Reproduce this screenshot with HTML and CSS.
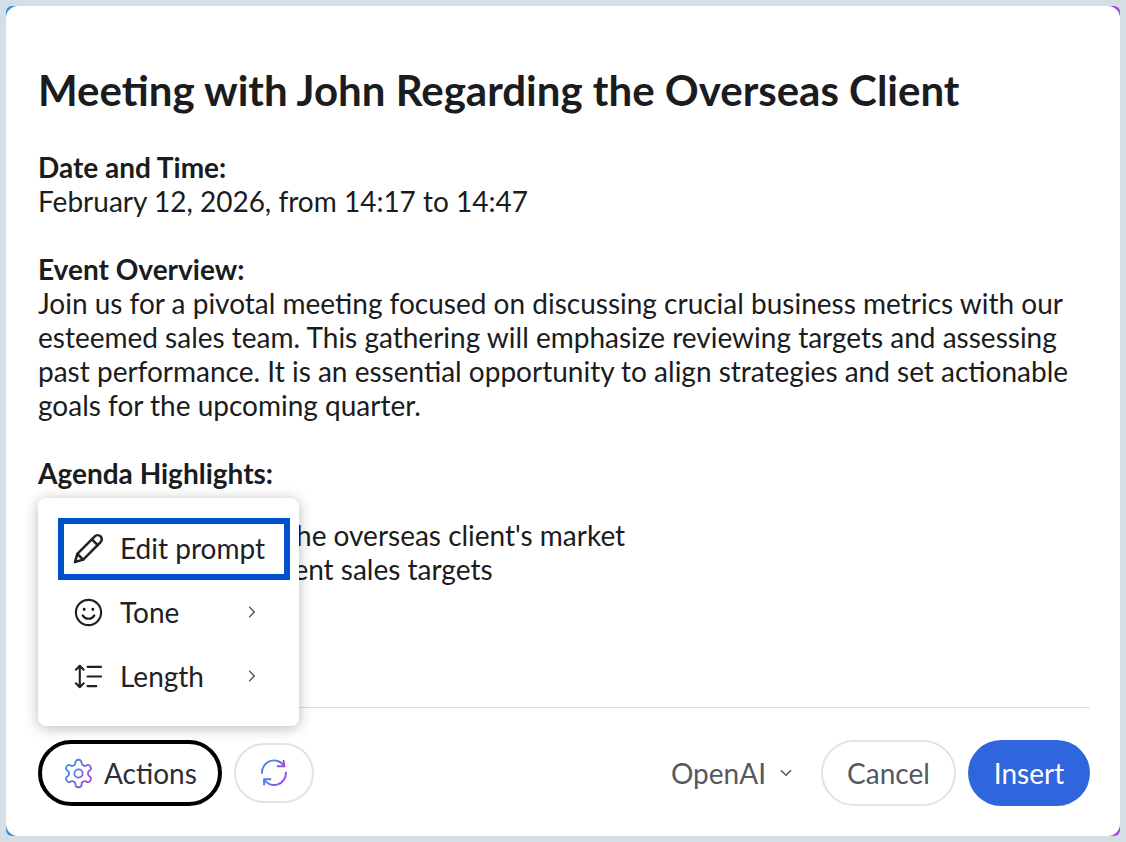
FILE: index.html
```html
<!DOCTYPE html>
<html lang="en">
<head>
  <meta charset="UTF-8" />
  <title>Meeting draft</title>
  <link rel="stylesheet" href="styles.css">
</head>
<body>
  <svg class="defs" width="0" height="0" aria-hidden="true">
    <defs>
      <linearGradient id="ai" x1="0" y1="0.2" x2="1" y2="0.8">
        <stop offset="0" stop-color="#3f8fe0" />
        <stop offset="0.5" stop-color="#5f6fe0" />
        <stop offset="1" stop-color="#b040e0" />
      </linearGradient>
    </defs>
  </svg>

  <main class="card">
    <article class="draft">
      <h1>Meeting with John Regarding the Overseas Client</h1>
      <p><strong>Date and Time:</strong><br>February 12, 2026, from 14:17 to 14:47</p>
      <p><strong>Event Overview:</strong><br>Join us for a pivotal meeting focused on discussing crucial business metrics with our esteemed sales team. This gathering will emphasize reviewing targets and assessing past performance. It is an essential opportunity to align strategies and set actionable goals for the upcoming quarter.</p>
      <p class="agenda-title"><strong>Agenda Highlights:</strong></p>
      <ul class="agenda">
        <li>Recent insights in the overseas client's market</li>
        <li>Reviewing the current sales targets</li>
      </ul>
    </article>

    <footer class="actions">
      <button class="btn btn-actions">
        <svg class="icon-gear" viewBox="0 0 24 24" fill="none" stroke="url(#ai)" stroke-width="1.3" stroke-linecap="round" stroke-linejoin="round">
          <path d="M12.22 2h-.44a2 2 0 0 0-2 2v.18a2 2 0 0 1-1 1.73l-.43.25a2 2 0 0 1-2 0l-.15-.08a2 2 0 0 0-2.73.73l-.22.38a2 2 0 0 0 .73 2.73l.15.1a2 2 0 0 1 1 1.72v.51a2 2 0 0 1-1 1.74l-.15.09a2 2 0 0 0-.73 2.73l.22.38a2 2 0 0 0 2.73.73l.15-.08a2 2 0 0 1 2 0l.43.25a2 2 0 0 1 1 1.73V20a2 2 0 0 0 2 2h.44a2 2 0 0 0 2-2v-.18a2 2 0 0 1 1-1.73l.43-.25a2 2 0 0 1 2 0l.15.08a2 2 0 0 0 2.73-.73l.22-.39a2 2 0 0 0-.73-2.73l-.15-.08a2 2 0 0 1-1-1.74v-.5a2 2 0 0 1 1-1.74l.15-.09a2 2 0 0 0 .73-2.73l-.22-.38a2 2 0 0 0-2.73-.73l-.15.08a2 2 0 0 1-2 0l-.43-.25a2 2 0 0 1-1-1.73V4a2 2 0 0 0-2-2z" />
          <circle cx="12" cy="12" r="3" />
        </svg>
        Actions
      </button>
      <button class="btn btn-refresh" aria-label="Regenerate">
        <svg class="icon-refresh" viewBox="0 0 28 28" fill="none" stroke="url(#ai)" stroke-width="1.9" stroke-linecap="round" stroke-linejoin="round">
          <path d="M2 14A12 12 0 0 1 24.300 7.300" />
          <path d="M23.600 1.700L24.300 7.300H17.500" />
          <path d="M26 13.500A12 12 0 0 1 4 20.600" />
          <path d="M4 25.500V20.300H10.500" />
        </svg>
      </button>

      <div class="model">OpenAI
        <svg viewBox="0 0 12 12" fill="none" stroke="#55585e" stroke-width="1.3" stroke-linecap="round" stroke-linejoin="round"><path d="M2 4l4 4 4-4" /></svg>
      </div>
      <button class="btn btn-cancel">Cancel</button>
      <button class="btn btn-insert">Insert</button>
    </footer>

    <nav class="menu">
      <a class="menu-item is-focus">
        <svg viewBox="0 0 32 32" fill="none" stroke="#1f2126" stroke-width="2.600" stroke-linecap="round" stroke-linejoin="round">
          <path d="M2 30l2.500-8.500L22.500 3.500a3.800 3.800 0 0 1 6 6L10.500 27.500z" />
          <path d="M19.500 6.500l6 6" />
          <path d="M4.500 21.500l6 6" />
        </svg>
        Edit prompt
      </a>
      <a class="menu-item">
        <svg viewBox="0 0 32 32" fill="none" stroke="#1f2126" stroke-width="2.200" stroke-linecap="round" stroke-linejoin="round">
          <circle cx="16" cy="16" r="13" />
          <path d="M10 19c1.500 2.500 3.500 3.500 6 3.500s4.500-1 6-3.500" />
          <path d="M11.500 12.500v.5M20.500 12.500v.5" stroke-width="3" />
        </svg>
        Tone
        <svg class="chev" viewBox="0 0 12 12" fill="none" stroke="#55585e" stroke-width="1.2" stroke-linecap="round" stroke-linejoin="round"><path d="M4 2l4 4-4 4" /></svg>
      </a>
      <a class="menu-item">
        <svg viewBox="0 0 32 32" fill="none" stroke="#1f2126" stroke-width="2.200" stroke-linecap="round" stroke-linejoin="round">
          <path d="M7 5v22M3 9l4-4 4 4M3 23l4 4 4-4" />
          <path d="M15 6h14M15 16h14M15 26h9" />
        </svg>
        Length
        <svg class="chev" viewBox="0 0 12 12" fill="none" stroke="#55585e" stroke-width="1.2" stroke-linecap="round" stroke-linejoin="round"><path d="M4 2l4 4-4 4" /></svg>
      </a>
    </nav>
  </main>
</body>
</html>
```

FILE: styles.css
```css
html, body {
  height: 100%;
}
body {
  margin: 0;
  padding: 6px;
  box-sizing: border-box;
  background-color: #d6dee5;
  font-family: 'Lato', sans-serif;
  color: #1a1c20;
  overflow: hidden;
  isolation: isolate;
}
.defs {
  position: absolute;
}
.card {
  position: relative;
  box-sizing: border-box;
  height: 830px;
  display: flex;
  flex-direction: column;
  padding: 0 30px 30px 32px;
  border-radius: 12px;
  background-color: #fff;
}
.card::before {
  content: "";
  position: absolute;
  inset: 0;
  z-index: -1;
  border-radius: 6px;
  background: linear-gradient(to right, #2f93dc, #a23fdc);
}
.draft {
  flex: 1;
  font-size: 28px;
  line-height: 34px;
}
.draft h1 {
  margin: 59px 0 0;
  font-size: 42px;
  line-height: 50px;
  font-weight: 700;
}
.draft p {
  margin: 34px 0 0;
}
.draft h1 + p {
  margin-top: 35px;
}
.agenda {
  margin: 28px 0 0;
  padding: 0 0 0 26px;
}
.agenda li {
  list-style: disc;
}
.actions {
  display: flex;
  align-items: center;
  gap: 12px;
  height: 99px;
  padding-top: 32px;
  border-top: 1px solid #dcdee0;
  box-sizing: border-box;
  font-size: 28px;
}
.btn {
  height: 66px;
  box-sizing: border-box;
  border-radius: 33px;
  border: 2px solid #e2e3e5;
  background: #fff;
  font: inherit;
  color: #2c2f35;
  display: flex;
  align-items: center;
  justify-content: center;
}
.btn-actions {
  width: 184px;
  gap: 9px;
  padding: 0 0 0 20px;
  justify-content: flex-start;
  border: 4px solid #000;
}
.btn-refresh {
  width: 80px;
  height: 60px;
  border-radius: 30px;
}
.icon-gear {
  width: 33px;
  height: 33px;
}
.icon-refresh {
  width: 28px;
  height: 28px;
}
.model {
  margin-left: auto;
  margin-right: 16px;
  display: flex;
  align-items: center;
  gap: 13px;
  color: #55585e;
}
.model svg {
  width: 14px;
  height: 14px;
}
.btn-cancel {
  width: 135px;
  color: #55585e;
}
.btn-insert {
  width: 122px;
  border: 0;
  background-color: #2f66de;
  color: #fff;
}
.menu {
  position: absolute;
  left: 32px;
  top: 492px;
  width: 261px;
  height: 228px;
  box-sizing: border-box;
  padding: 20px 0 0 20px;
  border-radius: 8px;
  background-color: #fff;
  box-shadow: 0 2px 14px rgba(0, 0, 0, 0.28);
  font-size: 28px;
}
.menu-item {
  position: relative;
  display: flex;
  align-items: center;
  gap: 16px;
  height: 64px;
  width: 232px;
  box-sizing: border-box;
  padding: 0 0 2px 15px;
  color: #1f2126;
}
.menu-item svg {
  width: 31px;
  height: 31px;
}
.menu-item .chev {
  position: absolute;
  left: 187px;
  width: 14px;
  height: 14px;
}
.is-focus {
  height: 62px;
  margin-bottom: 1px;
  outline: 6px solid #0052cc;
  outline-offset: -6px;
}
```
